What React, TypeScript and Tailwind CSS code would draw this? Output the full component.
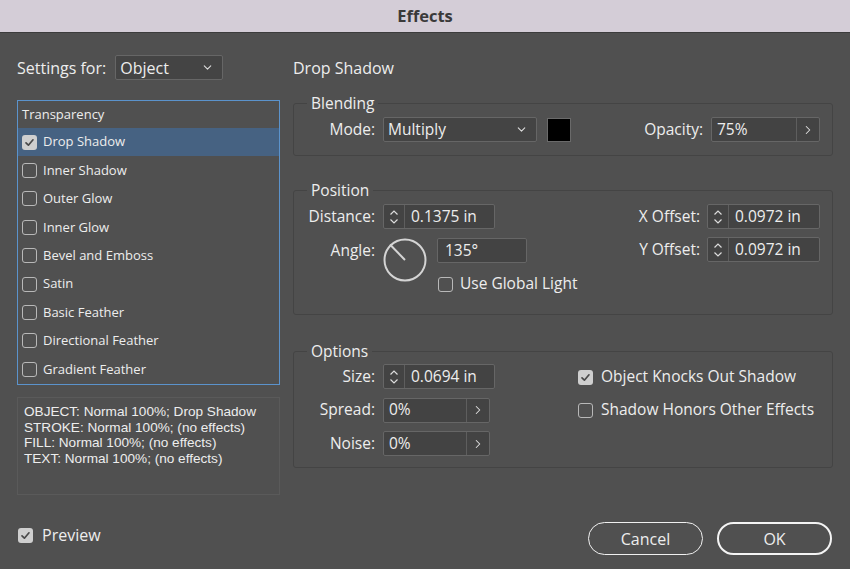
import { ChevronDown, ChevronRight } from 'lucide-react';

const effects = [
  'Drop Shadow',
  'Inner Shadow',
  'Outer Glow',
  'Inner Glow',
  'Bevel and Emboss',
  'Satin',
  'Basic Feather',
  'Directional Feather',
  'Gradient Feather',
];

const summary = [
  'OBJECT: Normal 100%; Drop Shadow',
  'STROKE: Normal 100%; (no effects)',
  'FILL: Normal 100%; (no effects)',
  'TEXT: Normal 100%; (no effects)',
];

function Check({ checked }: { checked?: boolean }) {
  if (checked) {
    return (
      <span className="w-[15px] h-[15px] rounded-[3px] bg-[#cfcfcf] flex items-center justify-center shrink-0">
        <svg width="11" height="11" viewBox="0 0 11 11">
          <path d="M2 5.8 L4.4 8.2 L9 2.8" fill="none" stroke="#4a4a4a" strokeWidth="1.7" strokeLinecap="round" strokeLinejoin="round" />
        </svg>
      </span>
    );
  }
  return <span className="w-[15px] h-[15px] rounded-[3px] border border-[#b8b8b8] shrink-0" />;
}

function Spin() {
  return (
    <svg width="10" height="18" viewBox="0 0 10 18">
      <path d="M1.5 6.5 L5 3 L8.5 6.5" fill="none" stroke="#dcdcdc" strokeWidth="1.2" />
      <path d="M1.5 11.5 L5 15 L8.5 11.5" fill="none" stroke="#dcdcdc" strokeWidth="1.2" />
    </svg>
  );
}

function SpinInput({ value, width }: { value: string; width: string }) {
  return (
    <div className={`flex h-[25px] border border-[#666] rounded-[2px] bg-[#434343] ${width}`}>
      <div className="w-[21px] border-r border-[#5e5e5e] flex items-center justify-center">
        <Spin />
      </div>
      <div className="flex-1 flex items-center pl-[6px] text-[15.5px]">{value}</div>
    </div>
  );
}

function ArrowInput({ value, width }: { value: string; width: string }) {
  return (
    <div className={`flex h-[25px] border border-[#666] rounded-[2px] bg-[#434343] ${width}`}>
      <div className="flex-1 flex items-center pl-[5px] text-[15.5px]">{value}</div>
      <div className="w-[23px] border-l border-[#5e5e5e] flex items-center justify-center">
        <ChevronRight size={14} strokeWidth={1.8} color="#e0e0e0" />
      </div>
    </div>
  );
}

function Label({ children }: { children: string }) {
  return <span className="w-[81px] text-right text-[15.5px] shrink-0">{children}</span>;
}

export default function App() {
  return (
    <div
      className="w-[850px] h-[569px] bg-[#505050] text-[#ededed] flex flex-col overflow-hidden"
      style={{ fontFamily: '"Open Sans", "Noto Sans", sans-serif' }}
    >
      <div className="h-[33px] bg-[#d4cdd7] border-b border-[#3c3c3c] flex items-center justify-center shrink-0">
        <span className="text-[16.5px] font-bold text-[#3a3a3a]">Effects</span>
      </div>

      <div className="flex gap-[13px] px-[17px] pt-[22px]">
        {/* left column */}
        <div className="w-[263px] flex flex-col">
          <div className="h-[25px] flex items-center">
            <span className="text-[16px]">Settings for:</span>
            <div className="ml-[9px] w-[108px] h-[25px] border border-[#666] rounded-[2px] bg-[#444] flex items-center justify-between pl-[4px] pr-[8px]">
              <span className="text-[16px]">Object</span>
              <ChevronDown size={13} strokeWidth={2} color="#dcdcdc" />
            </div>
          </div>

          <div className="mt-[20px] h-[285px] border border-[#5b93cc] flex flex-col">
            <div className="h-[27px] flex items-center pl-[4px] text-[13px]">Transparency</div>
            {effects.map((name, i) => (
              <div
                key={name}
                className={`h-[28.4px] flex items-center gap-[6px] pl-[4px] text-[13px] ${i === 0 ? 'bg-[#466282]' : ''}`}
              >
                <Check checked={i === 0} />
                <span>{name}</span>
              </div>
            ))}
          </div>

          <div
            className="mt-[12px] h-[98px] border border-[#5a5a5a] px-[6px] pt-[6px] text-[13.6px] leading-[15.7px]"
            style={{ fontFamily: '"Liberation Sans", Arial, sans-serif' }}
          >
            {summary.map((line) => (
              <p key={line}>{line}</p>
            ))}
          </div>
        </div>

        {/* right column */}
        <div className="w-[540px] flex flex-col">
          <div className="h-[25px] flex items-center text-[16px]">Drop Shadow</div>

          <fieldset className="mt-[13px] border border-[#444] rounded-[3px] px-0 pb-[13px]">
            <legend className="ml-[13px] px-[4px] text-[15.5px] leading-[20px]">Blending</legend>
            <div className="pt-[4px] flex items-center h-[29px] pr-[12px]">
              <Label>Mode:</Label>
              <div className="ml-[8px] w-[154px] h-[25px] border border-[#666] rounded-[2px] bg-[#444] flex items-center justify-between pl-[4px] pr-[8px]">
                <span className="text-[15.5px]">Multiply</span>
                <ChevronDown size={13} strokeWidth={2} color="#dcdcdc" />
              </div>
              <div className="ml-[10px] w-[24px] h-[24px] bg-black border border-[#6a6a6a]" />
              <div className="flex-1" />
              <span className="text-[15.5px]">Opacity:</span>
              <div className="ml-[8px]">
                <ArrowInput value="75%" width="w-[109px]" />
              </div>
            </div>
          </fieldset>

          <fieldset className="mt-[24px] border border-[#444] rounded-[3px] px-0 pb-[20px]">
            <legend className="ml-[13px] px-[4px] text-[15.5px] leading-[20px]">Position</legend>
            <div className="pt-[4px] flex justify-between pr-[12px]">
              <div className="flex flex-col">
                <div className="h-[25px] flex items-center">
                  <Label>Distance:</Label>
                  <div className="ml-[8px]">
                    <SpinInput value="0.1375 in" width="w-[112px]" />
                  </div>
                </div>
                <div className="mt-[9px] flex items-start">
                  <div className="h-[25px] flex items-center">
                    <Label>Angle:</Label>
                  </div>
                  <svg className="ml-[8px]" width="44" height="44" viewBox="0 0 44 44">
                    <circle cx="22" cy="22" r="20.5" fill="none" stroke="#d4d4d4" strokeWidth="2" />
                    <line x1="22" y1="22" x2="7" y2="6.5" stroke="#d4d4d4" strokeWidth="2" />
                  </svg>
                  <div className="ml-[10px] flex flex-col">
                    <div className="w-[90px] h-[25px] border border-[#666] rounded-[2px] bg-[#434343] flex items-center pl-[7px] text-[15.5px]">
                      135°
                    </div>
                    <div className="mt-[11px] h-[20px] flex items-center gap-[7px] pl-[1px]">
                      <Check />
                      <span className="text-[15.5px]">Use Global Light</span>
                    </div>
                  </div>
                </div>
              </div>

              <div className="flex flex-col items-end">
                <div className="h-[25px] flex items-center">
                  <span className="text-[15.5px]">X Offset:</span>
                  <div className="ml-[7px]">
                    <SpinInput value="0.0972 in" width="w-[113px]" />
                  </div>
                </div>
                <div className="mt-[8px] h-[25px] flex items-center">
                  <span className="text-[15.5px]">Y Offset:</span>
                  <div className="ml-[7px]">
                    <SpinInput value="0.0972 in" width="w-[113px]" />
                  </div>
                </div>
              </div>
            </div>
          </fieldset>

          <fieldset className="mt-[26px] border border-[#444] rounded-[3px] px-0 pb-[11px]">
            <legend className="ml-[13px] px-[4px] text-[15.5px] leading-[20px]">Options</legend>
            <div className="pt-[3px] flex">
              <div className="flex flex-col gap-[8.5px]">
                <div className="h-[25px] flex items-center">
                  <Label>Size:</Label>
                  <div className="ml-[8px]">
                    <SpinInput value="0.0694 in" width="w-[112px]" />
                  </div>
                </div>
                <div className="h-[25px] flex items-center">
                  <Label>Spread:</Label>
                  <div className="ml-[8px]">
                    <ArrowInput value="0%" width="w-[107px]" />
                  </div>
                </div>
                <div className="h-[25px] flex items-center">
                  <Label>Noise:</Label>
                  <div className="ml-[8px]">
                    <ArrowInput value="0%" width="w-[107px]" />
                  </div>
                </div>
              </div>
              <div className="ml-[83px] flex flex-col pt-[3px] gap-[13px]">
                <div className="h-[20px] flex items-center gap-[8px]">
                  <Check checked />
                  <span className="text-[15.5px]">Object Knocks Out Shadow</span>
                </div>
                <div className="h-[20px] flex items-center gap-[8px]">
                  <Check />
                  <span className="text-[15.5px]">Shadow Honors Other Effects</span>
                </div>
              </div>
            </div>
          </fieldset>
        </div>
      </div>

      <div className="mt-auto mb-[14px] h-[33px] flex items-center px-[17px]">
        <div className="flex items-center gap-[9px] pl-[1px] mb-[7px]">
          <Check checked />
          <span className="text-[16px]">Preview</span>
        </div>
        <div className="flex-1" />
        <button className="w-[115px] h-[33px] rounded-full border-[1.5px] border-[#f0f0f0] text-[16px]">
          Cancel
        </button>
        <button className="ml-[14px] mr-[1px] w-[115px] h-[33px] rounded-full border-[2.5px] border-[#f4f4f4] text-[16px]">
          OK
        </button>
      </div>
    </div>
  );
}
